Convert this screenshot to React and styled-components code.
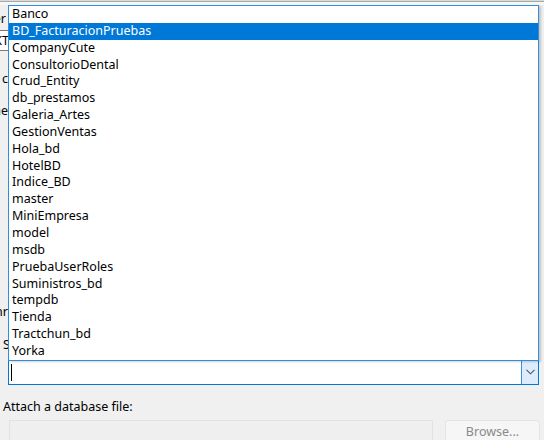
import React from 'react';
import styled, { createGlobalStyle } from 'styled-components';

const GlobalStyle = createGlobalStyle`
    html, body { margin: 0; padding: 0; background: #f0f0f0; }
    body { font-family: "Noto Sans", "Open Sans", sans-serif; font-size: 12.5px; color: #000; }
`;

const databases = [
    'Banco', 'BD_FacturacionPruebas', 'CompanyCute', 'ConsultorioDental', 'Crud_Entity',
    'db_prestamos', 'Galeria_Artes', 'GestionVentas', 'Hola_bd', 'HotelBD', 'Indice_BD',
    'master', 'MiniEmpresa', 'model', 'msdb', 'PruebaUserRoles', 'Suministros_bd',
    'tempdb', 'Tienda', 'Tractchun_bd', 'Yorka',
];

/** Dialog behind the popup **/
const Dialog = styled.div`
    position: relative;
    width: 544px;
    height: 440px;
    overflow: hidden;
    background: #f0f0f0;
    display: flex;
    flex-direction: column;
`;

const TopEdge = styled.div`
    height: 5px;
    flex: none;
    background: linear-gradient(#dadada 0 1px, #a9a9a9 1px 2px, #f7f7f7 2px 5px);
`;

/* label whose start is off to the left; only its tail shows */
const Fragment = styled.div`
    display: flex;
    justify-content: flex-end;
    width: ${props => props.clip || 8}px;
    margin-top: ${props => props.top || 0}px;
    height: 14px;
    line-height: 14px;
    overflow: hidden;
    white-space: nowrap;
    flex: none;
`;

const HiddenBox = styled.div`
    margin-top: 4px;
    height: 21px;
    width: 120px;
    margin-left: -100px;
    box-sizing: border-box;
    border: 1px solid #7a7a7a;
    border-right: none;
    background: #fff;
    display: flex;
    align-items: center;
    justify-content: flex-end;
    padding-right: 11px;
    white-space: nowrap;
    flex: none;
`;

/* label partly covered by the popup: only the part left of it is drawn */
const Label = styled.div`
    margin: ${props => props.top || 0}px 0 0 3px;
    width: ${props => props.clip ? `${props.clip}px` : 'auto'};
    overflow: hidden;
    height: 14px;
    line-height: 14px;
    white-space: nowrap;
    flex: none;
`;

const Combo = styled.div`
    margin: 7px 0 0 8px;
    width: 531px;
    height: 26px;
    box-sizing: border-box;
    border: 1px solid #0078d7;
    border-top-color: #1f4d7a;
    background: #fff;
    display: flex;
    align-items: stretch;
    flex: none;
`;

const ComboText = styled.div`
    flex: 1;
    display: flex;
    align-items: center;
    padding-left: 2px;
`;

const Caret = styled.span`
    width: 1px;
    height: 17px;
    background: #000;
`;

const DropButton = styled.div`
    width: 17px;
    box-sizing: border-box;
    border-left: 1px solid #3c8fd8;
    background: #dcecfc;
    display: flex;
    align-items: center;
    justify-content: center;
`;

const BottomRow = styled.div`
    margin-top: 6px;
    display: flex;
    align-items: flex-start;
    gap: 12px;
    flex: none;
`;

const FileBox = styled.div`
    margin-left: 9px;
    width: 424px;
    height: 23px;
    box-sizing: border-box;
    border: 1px solid #e2e2e2;
    background: #efefef;
`;

const BrowseButton = styled.div`
    width: 95px;
    height: 23px;
    box-sizing: border-box;
    border: 1px solid #e4e4e4;
    border-radius: 3px;
    background: #f6f6f6;
    color: #8a8a8a;
    display: flex;
    align-items: center;
    justify-content: center;
`;

/** Dropdown popup over the dialog **/
const Popup = styled.ul`
    position: absolute;
    left: 8px;
    top: 5px;
    width: 531px;
    margin: 0;
    padding: 0;
    list-style: none;
    box-sizing: border-box;
    border: 1px solid #2e8ee0;
    background: #fff;
    box-shadow: 2px 1px 2px rgba(0, 0, 0, 0.18);
`;

const Item = styled.li`
    height: 16.85px;
    line-height: 16.85px;
    padding-left: 3px;
    white-space: nowrap;
    background: ${props => props.selected ? '#0078d7' : 'transparent'};
    color: ${props => props.selected ? '#fff' : '#000'};
`;

const Chevron = () => (
    <svg width="9" height="6" viewBox="0 0 9 6">
        <path d="M0.5 0.8 L4.5 4.8 L8.5 0.8" fill="none" stroke="#555" strokeWidth="1.1" />
    </svg>
);

export default function App() {
    return (
        <Dialog>
            <GlobalStyle />
            <TopEdge />
            <Fragment top={7} clip={6}>Server</Fragment>
            <HiddenBox>DESKT</HiddenBox>
            <Fragment top={21} clip={8}>Log on c</Fragment>
            <Fragment top={18} clip={8}>the</Fragment>
            <Fragment top={187} clip={8}>Authenr</Fragment>
            <Label top={19} clip={5}>Select or enter a database name:</Label>
            <Combo>
                <ComboText><Caret /></ComboText>
                <DropButton><Chevron /></DropButton>
            </Combo>
            <Label top={15}>Attach a database file:</Label>
            <BottomRow>
                <FileBox />
                <BrowseButton>Browse...</BrowseButton>
            </BottomRow>
            <Popup>
                {databases.map((name, i) => (
                    <Item key={name} selected={i === 1}>{name}</Item>
                ))}
            </Popup>
        </Dialog>
    );
}
